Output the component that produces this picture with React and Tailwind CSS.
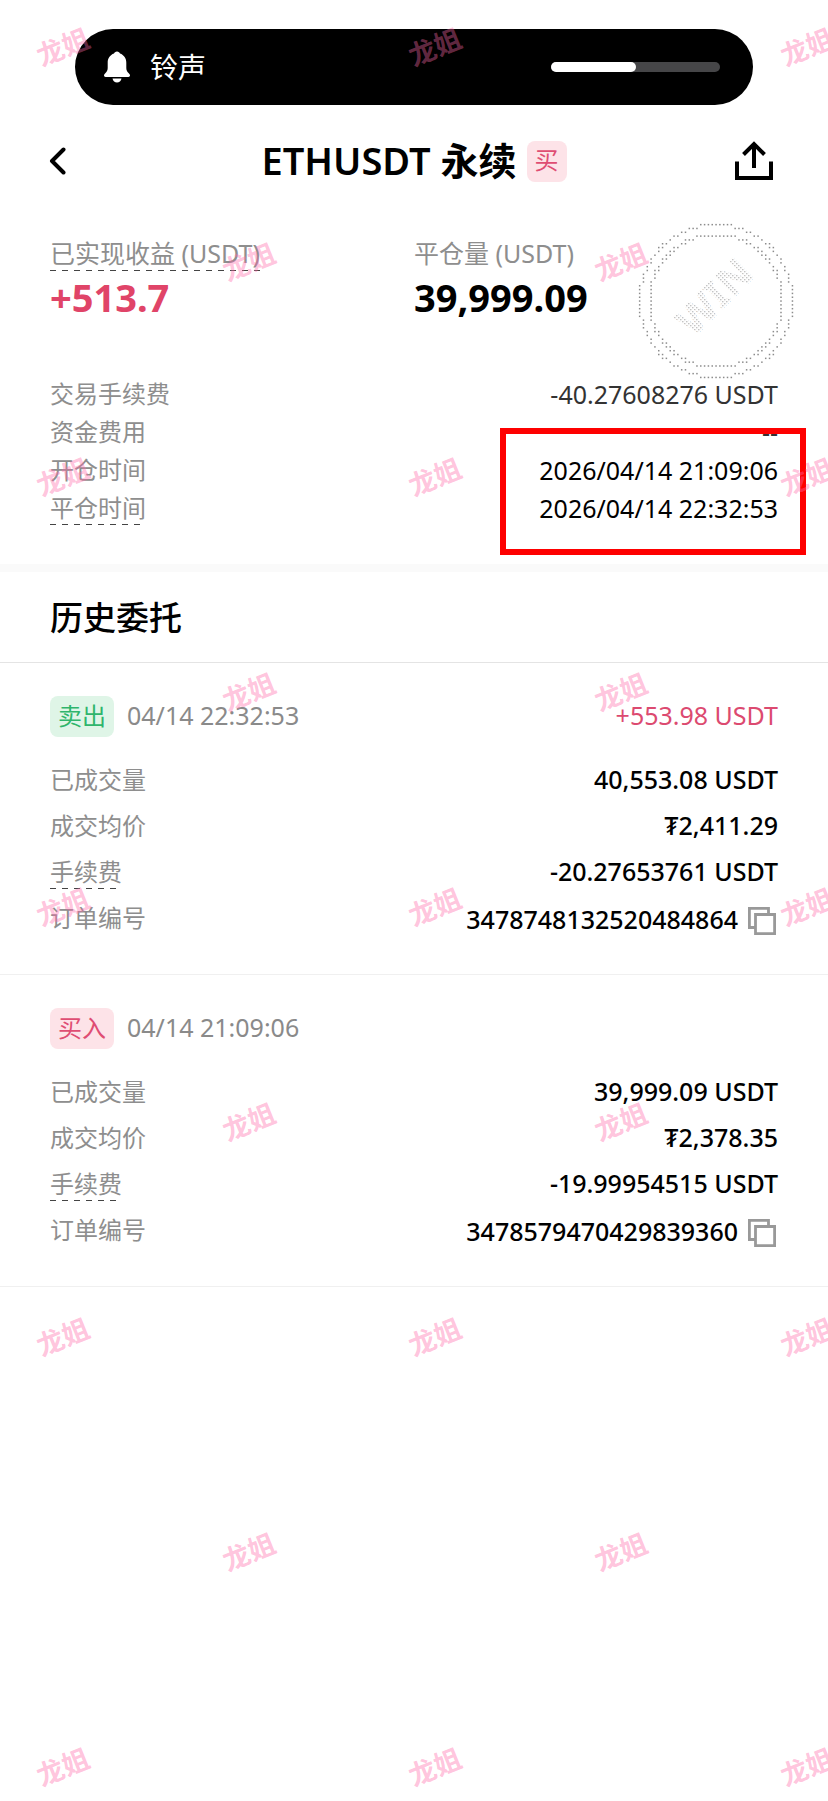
import { Fragment } from 'react';

const orders = [
  {
    side: '卖出',
    sell: true,
    time: '04/14 22:32:53',
    pnl: '+553.98 USDT',
    filled: '40,553.08 USDT',
    price: '₮2,411.29',
    fee: '-20.27653761 USDT',
    id: '3478748132520484864',
  },
  {
    side: '买入',
    sell: false,
    time: '04/14 21:09:06',
    pnl: null,
    filled: '39,999.09 USDT',
    price: '₮2,378.35',
    fee: '-19.99954515 USDT',
    id: '3478579470429839360',
  },
];

// staggered watermark grid, odd rows shift by half a column
const marks = [];
for (let row = 0; row < 9; row++) {
  for (let col = 0; col < 3; col++) {
    const x = 63 + col * 372 + (row % 2 ? 186 : 0);
    if (x < 860) marks.push({ x, y: 47 + row * 215 });
  }
}

// cells of a one-cell-thick circle on a dot grid
function ringCells(radius) {
  const cells = [];
  const max = Math.ceil(radius);
  for (let i = -max; i <= max; i++) {
    for (let j = -max; j <= max; j++) {
      if (Math.abs(Math.hypot(i, j) - radius) < 0.55) cells.push([i, j]);
    }
  }
  return cells;
}

const stampDots = [...ringCells(20), ...ringCells(17.4)];

function BellIcon() {
  return (
    <svg viewBox="0 0 28 32" className="h-8 w-7" fill="white" aria-hidden="true">
      <path d="M14 0.5c1.600 0 2.600 1 3 2.100 4 1.400 6.300 4.900 6.300 9.100v5.300c0 2.200.8 3.500 2.200 5 1 1 1.500 1.700 1.500 2.500 0 .9-.7 1.400-1.600 1.400H2.600c-.9 0-1.600-.5-1.600-1.400 0-.8.500-1.500 1.500-2.500 1.400-1.500 2.200-2.800 2.200-5v-5.300c0-4.200 2.300-7.700 6.300-9.100.4-1.100 1.400-2.100 3-2.100z" />
      <path d="M9.500 27.500h9c-.5 2.400-2.300 4-4.500 4s-4-1.600-4.500-4z" />
    </svg>
  );
}

function BackIcon() {
  return (
    <svg viewBox="0 0 18 28" className="h-7 w-[18px]" fill="none" stroke="black" strokeWidth="4" strokeLinecap="round" strokeLinejoin="round" aria-hidden="true">
      <path d="M14.500 2.500 3 14l11.500 11.500" />
    </svg>
  );
}

function ShareIcon() {
  return (
    <svg viewBox="0 0 38 40" className="h-10 w-[38px]" fill="none" stroke="black" strokeWidth="4" aria-hidden="true">
      <path d="M2 20.500V37h34V20.500" />
      <path d="M19 27V4" />
      <path d="M8.500 13.500 19 3l10.500 10.500" />
    </svg>
  );
}

function CopyIcon() {
  return (
    <svg viewBox="0 0 28 28" className="size-7" fill="none" stroke="#999999" strokeWidth="2.800" aria-hidden="true">
      <path d="M7 20.500H1.400V1.400h19.100V7" />
      <path d="M7.500 7.500h19.100v19.100H7.500z" />
    </svg>
  );
}

function WinStamp() {
  return (
    <svg viewBox="0 0 156 156" className="absolute top-0 right-[34px] size-[156px]" aria-label="WIN">
      <defs>
        <pattern id="win-dots" width="4" height="4" patternUnits="userSpaceOnUse" patternTransform="rotate(45)">
          <rect x="0" y="0" width="1.200" height="1.200" fill="#a8a8a8" />
          <rect x="2" y="2" width="1.200" height="1.200" fill="#a8a8a8" />
        </pattern>
      </defs>
      {stampDots.map(([i, j], n) => (
        <rect key={n} x={77.3 + i * 3.82} y={77.3 + j * 3.82} width="1.500" height="1.500" fill="#8c8c8c" />
      ))}
      <g transform="rotate(-45 77 74)">
        <text x="77" y="88" textAnchor="middle" fontSize="41" fontWeight="700" fill="url(#win-dots)">WIN</text>
      </g>
    </svg>
  );
}

function Label({ children, dashed }) {
  return (
    <span className={dashed
      ? 'relative text-[#8e8e8e] after:absolute after:left-0 after:right-0 after:-bottom-px after:h-px after:bg-[repeating-linear-gradient(to_right,#444_0_6px,transparent_6px_12px)]'
      : 'text-[#8e8e8e]'}
    >
      {children}
    </span>
  );
}

function Badge({ children, sell }) {
  return (
    <span className={`flex h-[41px] items-center justify-center rounded-lg px-2 pb-0.5 text-[24px] leading-8 ${
      sell ? 'bg-[#dff5e7] text-[#2fb56c]' : 'bg-[#fde3e8] text-[#df4d73]'
    }`}>
      {children}
    </span>
  );
}

function Order({ order }) {
  const rows = [
    ['已成交量', order.filled],
    ['成交均价', order.price],
    ['手续费', order.fee],
  ];

  return (
    <article className="border-b border-[#f0f0f0] px-[50px] py-[33px]">
      <div className="flex items-center justify-between">
        <div className="flex items-center gap-[13px]">
          <Badge sell={order.sell}>{order.side}</Badge>
          <time className="pb-1 text-[#8a8a8a]">{order.time}</time>
        </div>
        {order.pnl && <span className="pb-1 text-[#dc4a70]">{order.pnl}</span>}
      </div>

      <dl className="mt-5 grid grid-cols-[auto_1fr] auto-rows-[46px] items-center">
        {rows.map(([name, value]) => (
          <Fragment key={name}>
            <dt className="text-[24px]"><Label dashed={name === '手续费'}>{name}</Label></dt>
            <dd className="pb-0.5 text-right font-medium">{value}</dd>
          </Fragment>
        ))}
        <dt className="text-[24px]"><Label>订单编号</Label></dt>
        <dd className="flex items-center justify-end gap-2.5 pt-0.5 pr-0.5 font-medium">
          {order.id}
          <button type="button" aria-label="复制订单编号" className="pt-1">
            <CopyIcon />
          </button>
        </dd>
      </dl>
    </article>
  );
}

export default function App() {
  return (
    <div lang="zh-CN" className="relative min-h-screen overflow-hidden bg-white font-['Noto_Sans','Noto_Sans_CJK_SC',sans-serif] text-[25px] leading-8 text-black">
      <div className="mx-[75px] mt-[29px] flex h-[76px] items-center rounded-full bg-black pr-[33px] pl-7">
        <BellIcon />
        <span className="ml-[19px] text-[28px] text-white">铃声</span>
        <div role="progressbar" aria-label="铃声" aria-valuenow={50} className="ml-auto h-[10px] w-[169px] rounded-full bg-[#464648]">
          <div className="h-full w-1/2 rounded-full bg-white" />
        </div>
      </div>

      <header className="mt-6 flex h-16 items-center justify-between pr-[55px] pl-[49px]">
        <button type="button" aria-label="返回" className="flex w-11">
          <BackIcon />
        </button>
        <div className="flex items-center gap-2.5">
          <h1 className="pb-0.5 text-[38px] leading-[48px] font-semibold">ETHUSDT 永续</h1>
          <Badge>买</Badge>
        </div>
        <button type="button" aria-label="分享">
          <ShareIcon />
        </button>
      </header>

      <section className="relative mt-[30px] px-[50px]">
        <dl className="grid grid-cols-2 pt-3.5">
          <div>
            <dt><Label dashed>已实现收益 (USDT)</Label></dt>
            <dd className="mt-1 text-[38px] leading-[48px] font-bold text-[#e04468]">+513.7</dd>
          </div>
          <div>
            <dt><Label>平仓量 (USDT)</Label></dt>
            <dd className="mt-1 text-[38px] leading-[48px] font-bold">39,999.09</dd>
          </div>
        </dl>
        <WinStamp />

        <dl className="mt-[54px] grid grid-cols-[auto_1fr] auto-rows-[38px] items-center">
          <dt className="text-[24px]"><Label>交易手续费</Label></dt>
          <dd className="text-right text-[#333333]">-40.27608276 USDT</dd>
          <dt className="text-[24px]"><Label>资金费用</Label></dt>
          <dd className="text-right text-[#333333]">--</dd>
          <dt className="text-[24px]"><Label>开仓时间</Label></dt>
          <dd className="text-right">2026/04/14 21:09:06</dd>
          <dt className="text-[24px]"><Label dashed>平仓时间</Label></dt>
          <dd className="text-right">2026/04/14 22:32:53</dd>
        </dl>
        <div className="absolute right-[22px] -bottom-7 h-[127px] w-[306px] border-[6px] border-[#fe0000]" />
      </section>

      <section className="mt-[37px] border-t-[8px] border-[#fafafa]">
        <h2 className="flex h-[91px] items-center border-b border-[#e4e4e4] px-[50px] pt-0.5 text-[33px] leading-10 font-medium">历史委托</h2>
        {orders.map((order) => (
          <Order key={order.id} order={order} />
        ))}
      </section>

      <div aria-hidden="true" className="pointer-events-none absolute inset-0 overflow-hidden">
        {marks.map(({ x, y }) => (
          <span
            key={`${x}-${y}`}
            className="absolute -translate-x-1/2 -translate-y-1/2 -rotate-[22deg] text-[27px] leading-8 font-bold whitespace-nowrap text-[#ff69a8]/40"
            style={{ left: x, top: y }}
          >
            龙姐
          </span>
        ))}
      </div>
    </div>
  );
}
